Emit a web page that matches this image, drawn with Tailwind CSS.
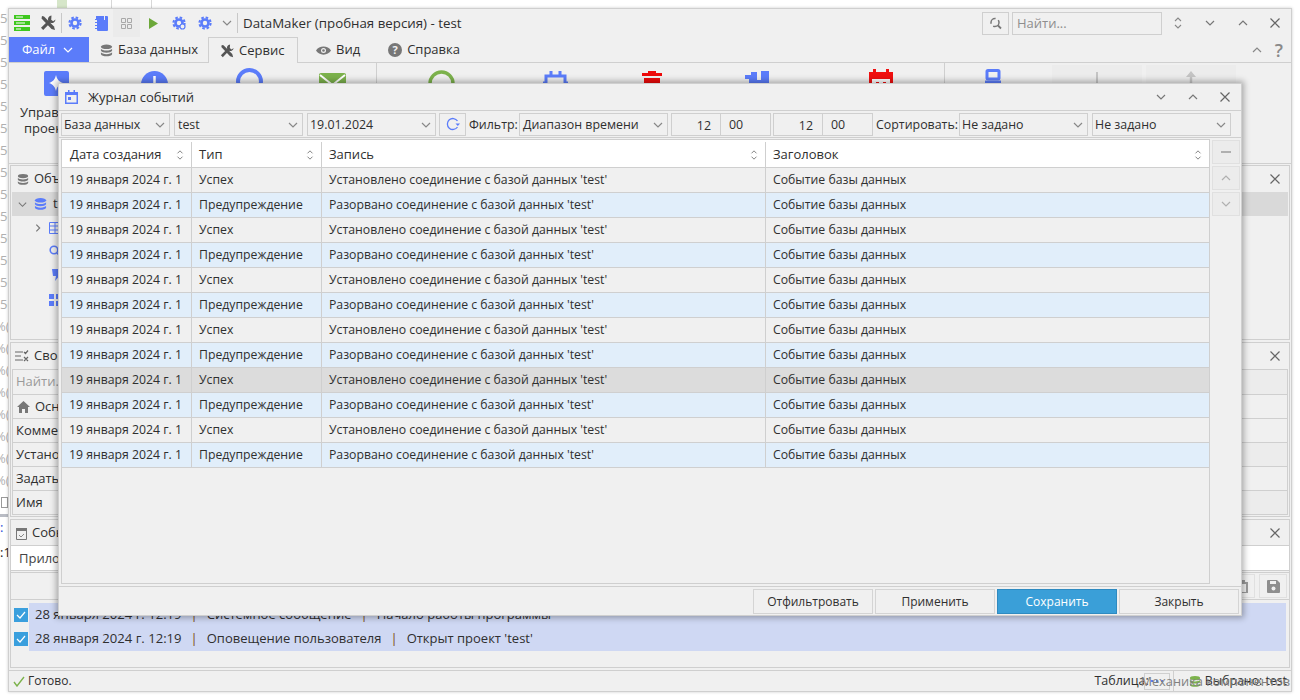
<!doctype html>
<html lang="ru">
  <head>
    <meta charset="utf-8" />
    <script src="https://cdn.jsdelivr.net/npm/@tailwindcss/browser@4"></script>
    <title>DataMaker</title>
  </head>
  <body class="relative w-[1300px] h-[700px] overflow-hidden bg-white font-['Open_Sans',sans-serif] text-[13px] text-[#2f2f2f]">
    <svg class="hidden">
      <symbol id="down" viewBox="0 0 12 12"><path d="M2 4l4 4 4-4" fill="none" stroke="currentColor" stroke-width="1.2" /></symbol>
      <symbol id="up" viewBox="0 0 12 12"><path d="M2 8l4-4 4 4" fill="none" stroke="currentColor" stroke-width="1.2" /></symbol>
      <symbol id="close" viewBox="0 0 12 12"><path d="M1.5 1.5l9 9M10.5 1.5l-9 9" fill="none" stroke="currentColor" stroke-width="1.2" /></symbol>
      <symbol id="updown" viewBox="0 0 12 16"><path d="M3 6l3-3 3 3M3 10l3 3 3-3" fill="none" stroke="currentColor" stroke-width="1.1" /></symbol>
      <symbol id="gear" viewBox="0 0 16 16"><circle cx="8" cy="8" r="4" fill="none" stroke="currentColor" stroke-width="3" /><circle cx="8" cy="8" r="6.4" fill="none" stroke="currentColor" stroke-width="2.4" stroke-dasharray="2.9 2.12" /></symbol>
      <symbol id="db" viewBox="0 0 14 14"><ellipse cx="7" cy="3" rx="6" ry="2.5" fill="currentColor" /><path d="M1 5c1 2.6 11 2.6 12 0v2.2c-1 2.8-11 2.8-12 0zM1 9c1 2.6 11 2.6 12 0v2c-1 3-11 3-12 0z" fill="currentColor" /></symbol>
      <symbol id="tools" viewBox="0 0 16 16"><path d="M2 1l2 .5 10 10 1 3.500-3.500-1L1.500 3.500z" fill="currentColor" /><path d="M11.500 .5a3.800 3.800 0 0 0-3.300 5.200L1 12.800 3.200 15l7.100-7.200A3.800 3.800 0 0 0 15.500 4.500l-2.300 1.700-2-1.500z" fill="currentColor" /></symbol>
    </svg>

    <!-- desktop behind the window -->
    <div class="absolute left-[57px] top-0 w-[10px] h-[8px] bg-[#d6e6c9]"></div>
    <div class="absolute left-[111px] top-0 w-px h-[8px] bg-[#d8d8d8]"></div>
    <div class="absolute left-[151px] top-0 w-px h-[8px] bg-[#d8d8d8]"></div>
    <div class="absolute left-0 top-[7px] w-[8px] h-[308px] overflow-hidden text-[#b0b0b0] leading-[22px] whitespace-pre">56
56
56
56
56
56
56
56
56
56
56
56
56
56</div>
    <div class="absolute left-0 top-[315px] w-[8px] h-[176px] overflow-hidden text-[#b0b0b0] leading-[22px] whitespace-pre"><div class="-ml-[5px]">%(
%(
%(
%(
%(
%(
%(
%(</div></div>
    <div class="absolute left-[1px] top-[497px] w-[7px] h-[11px] border border-[#9a9a9a]"></div>
    <div class="absolute left-0 top-[514px] w-[8px] h-[3px] bg-[#b9bcc4]"></div>
    <div class="absolute left-0 top-[519px] text-[#2b50d8] leading-[16px]">:</div>
    <div class="absolute left-0 top-[544px] text-[#222] leading-[16px] w-[8px] overflow-hidden">:1</div>

    <!-- main window -->
    <div class="absolute left-[8px] top-[8px] w-[1284px] h-[684px] bg-[#f0f0f0] border border-[#cfcfcf] shadow-[0_0_3px_rgba(0,0,0,0.2)] flex flex-col">
      <!-- title bar -->
      <div class="h-[28px] flex items-center shrink-0">
        <svg class="ml-[5px] w-[16px] h-[16px]" viewBox="0 0 16 16"><path d="M0 0h16v4H0zM0 6h16v4H0zM0 12h16v4H0z" fill="#3fc81f" /><path d="M2 1.500h7v1H2zM2 7.500h9v1H2zM2 13.500h5v1H2z" fill="#fff" /></svg>
        <svg class="ml-[10px] w-[16px] h-[16px] text-[#555]"><use href="#tools" /></svg>
        <div class="ml-[5px] w-px h-[20px] bg-[#c8c8c8]"></div>
        <svg class="ml-[6px] w-[14px] h-[14px] text-[#5b7cfa]"><use href="#gear" /></svg>
        <svg class="ml-[13px] w-[13px] h-[15px]" viewBox="0 0 13 15"><path d="M1 0h8v4h1V0h2a1 1 0 0 1 1 1v13a1 1 0 0 1-1 1H3a1 1 0 0 1-1-1v-1H0v-1h2v-2H0V9h2V7H0V6h2V4H0V3h1z" fill="#5b7cfa" /></svg>
        <div class="ml-[5px] w-[27px] h-[28px] bg-[#ebebeb] flex items-center justify-center">
          <svg class="w-[11px] h-[11px]" viewBox="0 0 11 11"><path d="M.5.500h4v4h-4zM6.500.500h4v4h-4zM.5 6.500h4v4h-4zM6.500 6.500h4v4h-4z" fill="none" stroke="#a8a8a8" /></svg>
        </div>
        <svg class="ml-[9px] w-[9px] h-[11px]" viewBox="0 0 9 11"><path d="M0 0l9 5.500L0 11z" fill="#6ca83a" /></svg>
        <svg class="ml-[14px] w-[14px] h-[14px] text-[#5b7cfa]" viewBox="0 0 14 14"><use href="#gear" width="14" height="14" /><circle cx="10.500" cy="10.500" r="2.500" fill="#f0f0f0" stroke="#5b7cfa" stroke-width="1.200" /></svg>
        <svg class="ml-[12px] w-[14px] h-[14px] text-[#5b7cfa]"><use href="#gear" /></svg>
        <svg class="ml-[9px] w-[12px] h-[12px] text-[#888]"><use href="#down" /></svg>
        <div class="ml-[4px] w-px h-[20px] bg-[#c8c8c8]"></div>
        <span class="ml-[5px] pt-px text-[13.300px]">DataMaker (пробная версия) - test</span>
        <div class="ml-auto w-[27px] h-[23px] border border-[#cfcfcf] flex items-center justify-center">
          <svg class="w-[13px] h-[13px]" viewBox="0 0 13 13"><circle cx="6" cy="5.500" r="4" fill="none" stroke="#777" stroke-width="1.500" stroke-dasharray="8 3" /><path d="M9 8.500l3 3" stroke="#777" stroke-width="1.800" /></svg>
        </div>
        <div class="ml-[3px] w-[150px] h-[23px] border border-[#cfcfcf] pl-[4px] leading-[21px] text-[#8e8e8e]">Найти...</div>
        <svg class="ml-[10px] w-[12px] h-[16px] text-[#888]"><use href="#updown" /></svg>
        <svg class="ml-[20px] w-[12px] h-[12px] text-[#777]"><use href="#down" /></svg>
        <svg class="ml-[21px] w-[12px] h-[12px] text-[#777]"><use href="#up" /></svg>
        <svg class="ml-[20px] mr-[10px] w-[12px] h-[12px] text-[#666]"><use href="#close" /></svg>
      </div>

      <!-- tabs -->
      <div class="h-[26px] flex items-stretch shrink-0 border-b border-[#cfcfcf]">
        <div class="w-[80px] h-[25px] bg-[#5b7cfa] text-white flex items-center pl-[13px]">
          Файл
          <svg class="ml-[7px] w-[12px] h-[12px]"><use href="#down" /></svg>
        </div>
        <div class="ml-[11px] pt-px flex items-center">
          <svg class="w-[13px] h-[13px] text-[#777]"><use href="#db" /></svg>
          <span class="ml-[5px]">База данных</span>
        </div>
        <div class="ml-[10px] w-[90px] h-[26px] pt-px bg-[#f0f0f0] border border-b-0 border-[#cfcfcf] flex items-center pl-[11px]">
          <svg class="w-[14px] h-[14px] text-[#555]"><use href="#tools" /></svg>
          <span class="ml-[5px]">Сервис</span>
        </div>
        <div class="ml-[18px] pt-px flex items-center">
          <svg class="w-[15px] h-[11px]" viewBox="0 0 15 11"><path d="M0 5.500C3 0 12 0 15 5.500 12 11 3 11 0 5.500z" fill="#777" /><circle cx="7.500" cy="5.500" r="2.500" fill="#f0f0f0" /><circle cx="7.500" cy="5.500" r="1.300" fill="#777" /></svg>
          <span class="ml-[5px]">Вид</span>
        </div>
        <div class="ml-[28px] pt-px flex items-center">
          <svg class="w-[14px] h-[14px]" viewBox="0 0 14 14"><circle cx="7" cy="7" r="7" fill="#777" /><text x="7" y="11" text-anchor="middle" font-size="11" font-weight="700" fill="#f0f0f0">?</text></svg>
          <span class="ml-[5px]">Справка</span>
        </div>
        <svg class="ml-auto w-[12px] h-[12px] self-center text-[#888]"><use href="#up" /></svg>
        <span class="ml-[12px] mr-[8px] self-center text-[18px] font-semibold leading-none text-[#8a8a8a]">?</span>
      </div>

      <!-- ribbon -->
      <div class="h-[100px] shrink-0 relative">
        <svg class="absolute left-[35px] top-[8px] w-[25px] h-[25px]" viewBox="0 0 25 25"><path d="M2 0h21a2 2 0 0 1 2 2v20l-6-2-4 5H2a2 2 0 0 1-2-2V2a2 2 0 0 1 2-2z" fill="#5b7cfa" /><path d="M12 4c1 4.500 3 6.500 7 8-4 1.500-6 3.500-7 8-1-4.500-3-6.500-7-8 4-1.500 6-3.500 7-8z" fill="#fff" /></svg>
        <svg class="absolute left-[132px] top-[8px] w-[27px] h-[27px]" viewBox="0 0 27 27"><circle cx="13.500" cy="13.500" r="13.500" fill="#5b7cfa" /><path d="M13.500 5v9" stroke="#fff" stroke-width="2.500" /></svg>
        <svg class="absolute left-[227px] top-[5px] w-[27px] h-[27px]" viewBox="0 0 27 27"><circle cx="13.500" cy="13.500" r="11.500" fill="none" stroke="#5b7cfa" stroke-width="4" /></svg>
        <svg class="absolute left-[310px] top-[10px] w-[27px] h-[22px]" viewBox="0 0 27 22"><rect width="27" height="22" rx="2" fill="#7cb24c" /><path d="M1 2l12.500 10L26 2" fill="none" stroke="#fff" stroke-width="2" /></svg>
        <div class="absolute left-[367px] top-0 w-px h-[70px] bg-[#cfcfcf]"></div>
        <svg class="absolute left-[419px] top-[7px] w-[27px] h-[27px]" viewBox="0 0 27 27"><circle cx="13.500" cy="13.500" r="11.500" fill="none" stroke="#7cb24c" stroke-width="3.500" /></svg>
        <svg class="absolute left-[534px] top-[8px] w-[25px] h-[25px]" viewBox="0 0 25 25"><rect x="3" y="5" width="19" height="17" fill="none" stroke="#5b7cfa" stroke-width="3" /><path d="M8 0v5M17 0v5M0 12h3M22 12h3" stroke="#5b7cfa" stroke-width="3" /></svg>
        <svg class="absolute left-[633px] top-[8px] w-[20px] h-[25px]" viewBox="0 0 20 25"><path d="M6 0h8v2h6v3H0V2h6zM2 7h16v18H2z" fill="#ee0a0a" /></svg>
        <svg class="absolute left-[736px] top-[8px] w-[25px] h-[25px]" viewBox="0 0 25 25"><path d="M6 1h6v8h4V0h8v25H4V8H0V4h6z" fill="#5b7cfa" /></svg>
        <svg class="absolute left-[860px] top-[6px] w-[24px] h-[26px]" viewBox="0 0 24 26"><path d="M4 0h3v3h10V0h3v3h4v23H0V3h4z" fill="#f01010" /><rect x="3" y="10" width="18" height="13" fill="#fff" /><path d="M7 13h3v3H7zM14 13h3v3h-3z" fill="#f01010" /></svg>
        <div class="absolute left-[935px] top-0 w-px h-[70px] bg-[#cfcfcf]"></div>
        <svg class="absolute left-[976px] top-[6px] w-[16px] h-[17px]" viewBox="0 0 16 17"><rect x="2" y="1.500" width="12" height="8.500" rx="1" fill="none" stroke="#5b7cfa" stroke-width="3" /><path d="M0 11.500h16v3H0z" fill="#5b7cfa" /></svg>
        <div class="absolute left-[1043px] top-[2px] w-[90px] h-[70px] bg-[#ececec] flex justify-center">
          <div class="mt-[7px] w-[2px] h-[20px] bg-[#c4c4c4]"></div>
        </div>
        <div class="absolute left-[1137px] top-[2px] w-[90px] h-[70px] bg-[#ececec] flex justify-center">
          <svg class="mt-[6px] w-[12px] h-[20px]" viewBox="0 0 12 20"><path d="M6 0l5 6H7.200v14H4.800V6H1z" fill="#c4c4c4" /></svg>
        </div>
        <span class="absolute left-[11px] top-[40px]">Управ...</span>
        <span class="absolute left-[15px] top-[56px]">проект</span>
      </div>

      <div class="h-px shrink-0 bg-[#cfcfcf]"></div>
      <div class="h-px shrink-0"></div>

      <!-- objects panel -->
      <div class="ml-px mr-px h-[175px] shrink-0 border border-[#cfcfcf] flex flex-col">
        <div class="h-[26px] flex items-center pl-[6px] pr-[8px] shrink-0">
          <svg class="w-[12px] h-[13px] text-[#777]"><use href="#db" /></svg>
          <span class="ml-[5px]">Объекты</span>
          <svg class="ml-auto w-[12px] h-[12px] text-[#666]"><use href="#close" /></svg>
        </div>
        <div class="h-[24px] mx-px bg-[#d9d9d9] flex items-center pl-[5px]">
          <svg class="w-[11px] h-[11px] text-[#777]"><use href="#down" /></svg>
          <svg class="ml-[6px] w-[13px] h-[14px] text-[#5b7cfa]"><use href="#db" /></svg>
          <span class="ml-[6px]">test</span>
        </div>
        <div class="h-[24px] flex items-center pl-[22px]">
          <svg class="w-[10px] h-[10px] text-[#777]" viewBox="0 0 12 12"><path d="M4 2l4 4-4 4" fill="none" stroke="currentColor" stroke-width="1.400" /></svg>
          <svg class="ml-[6px] w-[12px] h-[12px]" viewBox="0 0 12 12"><path d="M.5.500h11v11H.5zM.5 4h11M.5 8h11M6 .5v11" fill="none" stroke="#5b7cfa" /></svg>
        </div>
        <div class="h-[21px] flex items-center pl-[38px]">
          <svg class="w-[12px] h-[12px]" viewBox="0 0 12 12"><circle cx="5" cy="5" r="3.800" fill="none" stroke="#5b7cfa" stroke-width="1.600" /><path d="M8 8l3.500 3.500" stroke="#5b7cfa" stroke-width="1.600" /></svg>
        </div>
        <div class="h-[27px] flex items-center pl-[40px]">
          <svg class="w-[10px] h-[12px]" viewBox="0 0 10 12"><path d="M1 0h8L7 5h3l-6 7 1-5H2z" fill="#5b7cfa" /></svg>
        </div>
        <div class="h-[24px] flex items-center pl-[38px]">
          <svg class="w-[12px] h-[12px]" viewBox="0 0 12 12"><path d="M0 0h5v5H0zM7 0h5v5H7zM0 7h5v5H0zM7 7h5v5H7z" fill="#5b7cfa" /></svg>
        </div>
      </div>
      <div class="h-[2px] shrink-0"></div>

      <!-- properties panel -->
      <div class="ml-px mr-px h-[175px] shrink-0 border border-[#cfcfcf] flex flex-col">
        <div class="h-[26px] flex items-center pl-[4px] pr-[8px] shrink-0">
          <svg class="w-[14px] h-[12px]" viewBox="0 0 14 12"><path d="M0 2h8M0 6h6M0 10h8M9 2l1.500 1.500L13 .5M9 7l4 4M13 7l-4 4" fill="none" stroke="#666" stroke-width="1.200" /></svg>
          <span class="ml-[5px]">Свойства</span>
          <svg class="ml-auto w-[12px] h-[12px] text-[#666]"><use href="#close" /></svg>
        </div>
        <div class="mx-px flex-1 border border-[#cfcfcf] mb-px flex flex-col">
          <div class="h-[25px] border-b border-[#cfcfcf] bg-[linear-gradient(90deg,#f0f0f0_200px,#ececec_200px)] flex items-center pl-[3px] text-[#9a9a9a]">Найти...</div>
          <div class="h-[24px] border-b border-[#cfcfcf] flex items-center pl-[4px]">
            <svg class="w-[13px] h-[12px]" viewBox="0 0 13 12"><path d="M6.500 0L13 6h-2v6H8V8H5v4H2V6H0z" fill="#777" /></svg>
            <span class="ml-[5px]">Основные</span>
          </div>
          <div class="h-[24px] border-b border-[#cfcfcf] flex items-center pl-[3px]">Комментарий</div>
          <div class="h-[24px] border-b border-[#cfcfcf] bg-[linear-gradient(90deg,#f0f0f0_200px,#ececec_200px)] flex items-center pl-[3px]">Установлено</div>
          <div class="h-[24px] border-b border-[#cfcfcf] flex items-center pl-[3px]">Задать</div>
          <div class="flex-1 bg-[linear-gradient(90deg,#f0f0f0_200px,#ececec_200px)] flex items-center pl-[3px]">Имя</div>
        </div>
      </div>
      <div class="h-[2px] shrink-0"></div>

      <!-- events panel -->
      <div class="ml-px mr-px h-[149px] shrink-0 border border-[#cfcfcf] flex flex-col">
        <div class="h-[26px] pt-px flex items-center pl-[5px] pr-[8px] shrink-0 border-b border-[#cfcfcf]">
          <svg class="w-[11px] h-[13px]" viewBox="0 0 11 13"><path d="M.5 2.500h10v10H.5z" fill="none" stroke="#777" /><path d="M0 1h11v3H0z" fill="#777" /><path d="M3 8l2 2 3-3" fill="none" stroke="#888" /></svg>
          <span class="ml-[5px]">События</span>
          <svg class="ml-auto w-[12px] h-[12px] text-[#666]"><use href="#close" /></svg>
        </div>
        <div class="h-[25px] pt-px bg-white flex items-center pl-[8px] border-b border-[#cfcfcf] mb-px text-[#444]">Приложение</div>
        <div class="h-[28px] border-y border-[#cfcfcf] flex items-center justify-end pr-[2px] gap-[4px]">
          <div class="w-[24px] h-[24px] border border-[#e0e0e0] flex items-center justify-center">
            <svg class="w-[12px] h-[13px]" viewBox="0 0 12 13"><path d="M1 3h10M2 3v10h8V3M4 1h4" fill="none" stroke="#9a9a9a" stroke-width="2" /></svg>
          </div>
          <div class="w-[28px] h-[24px] border border-[#e0e0e0] flex items-center justify-center">
            <svg class="w-[13px] h-[13px]" viewBox="0 0 13 13"><path d="M1 0h9l3 3v9a1 1 0 0 1-1 1H1a1 1 0 0 1-1-1V1a1 1 0 0 1 1-1z" fill="#8e8e8e" /><path d="M3 1h6v3H3z" fill="#f0f0f0" /><circle cx="6.500" cy="8.500" r="2" fill="#f0f0f0" /></svg>
          </div>
        </div>
        <div class="mt-[2px] flex items-center h-[25px]">
          <div class="ml-[3px] w-[14px] h-[14px] bg-[#3a9fdd] flex items-center justify-center">
            <svg class="w-[10px] h-[10px]" viewBox="0 0 10 10"><path d="M1 5l3 3 5-6" fill="none" stroke="#fff" stroke-width="1.200" /></svg>
          </div>
          <div class="ml-px mr-[3px] flex-1 h-[24px] bg-[#cfd8f3] flex items-center pl-[6px]">
            <span class="text-[13.100px]">28 января 2024 г. 12:19</span><span class="mx-[9px] text-[#7a4a10]">|</span><span>Системное сообщение</span><span class="mx-[9px] text-[#7a4a10]">|</span><span>Начало работы программы</span>
          </div>
        </div>
        <div class="flex items-center h-[24px]">
          <div class="ml-[3px] w-[14px] h-[14px] bg-[#3a9fdd] flex items-center justify-center">
            <svg class="w-[10px] h-[10px]" viewBox="0 0 10 10"><path d="M1 5l3 3 5-6" fill="none" stroke="#fff" stroke-width="1.200" /></svg>
          </div>
          <div class="ml-px mr-[3px] flex-1 h-[24px] bg-[#cfd8f3] flex items-center pl-[6px]">
            <span class="text-[13.100px]">28 января 2024 г. 12:19</span><span class="mx-[9px] text-[#7a4a10]">|</span><span>Оповещение пользователя</span><span class="mx-[9px] text-[#7a4a10]">|</span><span>Открыт проект 'test'</span>
          </div>
        </div>
      </div>

      <!-- status bar -->
      <div class="mt-[2px] flex-1 border-t border-[#cfcfcf] flex items-center pl-[4px] relative">
        <svg class="w-[12px] h-[11px]" viewBox="0 0 12 11"><path d="M1 6l3 4 7-9" fill="none" stroke="#7cb24c" stroke-width="1.400" /></svg>
        <span class="ml-[3px] text-[12px]">Готово.</span>
        <span class="ml-auto text-[12.500px]">Таблица:</span>
        <div class="-ml-[5px] w-[26px] h-[17px] border border-[#cfcfcf] flex items-center justify-center gap-[3px]">
          <span class="w-[2px] h-[2px] bg-[#5b7cfa]"></span><span class="w-[2px] h-[2px] bg-[#5b7cfa]"></span><span class="w-[2px] h-[2px] bg-[#5b7cfa]"></span>
        </div>
        <div class="ml-[3px] w-px h-[20px] bg-[#cfcfcf]"></div>
        <svg class="ml-[15px] w-[12px] h-[13px] text-[#7cb24c]"><use href="#db" /></svg>
        <span class="ml-[4px] mr-[4px] text-[12.300px]">Выбрано: test</span>
        <span class="absolute right-[1px] top-0 text-[12.800px] leading-[21px] text-[#808080]">Механика компонентов</span>
      </div>
    </div>

    <!-- journal dialog -->
    <div class="absolute left-[58px] top-[83px] w-[1184px] h-[533px] bg-[#f0f0f0] border border-[#cfcfcf] shadow-[0_0_6px_2px_rgba(0,0,0,0.3)] flex flex-col">
      <div class="h-[26px] flex items-center shrink-0">
        <svg class="ml-[6px] w-[13px] h-[14px]" viewBox="0 0 13 14"><path d="M3 0h1.500v2h4V0H10v2h3v12H0V2h3z" fill="#5b7cfa" /><rect x="1.500" y="5" width="10" height="7.500" fill="#f0f0f0" /><rect x="3" y="7" width="3" height="3" fill="#5b7cfa" /></svg>
        <span class="ml-[10px] pt-px">Журнал событий</span>
        <svg class="ml-auto w-[12px] h-[12px] text-[#777]"><use href="#down" /></svg>
        <svg class="ml-[20px] w-[12px] h-[12px] text-[#777]"><use href="#up" /></svg>
        <svg class="ml-[20px] mr-[10px] w-[12px] h-[12px] text-[#666]"><use href="#close" /></svg>
      </div>

      <!-- filter row -->
      <div class="h-[28px] shrink-0 border-y border-[#cfcfcf] flex items-center pl-[2px] text-[12.400px]">
        <div class="w-[109px] h-[23px] pt-[2px] border border-[#cfcfcf] flex items-center justify-between pl-[2px] pr-[3px]">База данных<svg class="w-[12px] h-[12px] text-[#888]"><use href="#down" /></svg></div>
        <div class="ml-[4px] w-[129px] h-[23px] pt-[2px] border border-[#cfcfcf] flex items-center justify-between pl-[3px] pr-[3px]">test<svg class="w-[12px] h-[12px] text-[#888]"><use href="#down" /></svg></div>
        <div class="ml-[4px] w-[129px] h-[23px] pt-[2px] border border-[#cfcfcf] flex items-center justify-between pl-[2px] pr-[3px]">19.01.2024<svg class="w-[12px] h-[12px] text-[#888]"><use href="#down" /></svg></div>
        <div class="ml-[3px] w-[27px] h-[23px] border border-[#cfcfcf] flex items-center justify-center">
          <svg class="w-[15px] h-[14px]" viewBox="0 0 15 14"><path d="M12.500 4A5.500 5.500 0 1 0 12.500 10" fill="none" stroke="#5b7cfa" stroke-width="1.300" /><path d="M10.500 6.500h4.500L12.800 9z" fill="#5b7cfa" /></svg>
        </div>
        <span class="ml-[3px] w-[50px] pt-[2px]">Фильтр:</span>
        <div class="w-[149px] h-[23px] pt-[2px] border border-[#cfcfcf] flex items-center justify-between pl-[3px] pr-[3px]">Диапазон времени<svg class="w-[12px] h-[12px] text-[#888]"><use href="#down" /></svg></div>
        <div class="ml-[3px] w-[100px] h-[23px] border border-[#cfcfcf] flex items-center">
          <span class="w-[49px] h-full border-r border-[#cfcfcf] text-right pr-[9px] leading-[23px]">12</span><span class="pl-[8px] pt-[2px]">00</span>
        </div>
        <div class="ml-[2px] w-[100px] h-[23px] border border-[#cfcfcf] flex items-center">
          <span class="w-[49px] h-full border-r border-[#cfcfcf] text-right pr-[9px] leading-[23px]">12</span><span class="pl-[8px] pt-[2px]">00</span>
        </div>
        <span class="ml-[3px] w-[83px] pt-[2px]">Сортировать:</span>
        <div class="w-[129px] h-[23px] pt-[2px] border border-[#cfcfcf] flex items-center justify-between pl-[2px] pr-[3px]">Не задано<svg class="w-[12px] h-[12px] text-[#888]"><use href="#down" /></svg></div>
        <div class="ml-[4px] w-[139px] h-[23px] pt-[2px] border border-[#cfcfcf] flex items-center justify-between pl-[2px] pr-[3px]">Не задано<svg class="w-[12px] h-[12px] text-[#888]"><use href="#down" /></svg></div>
      </div>

      <!-- table and side buttons -->
      <div class="flex-1 flex min-h-0">
        <div class="ml-[2px] mt-px w-[1149px] border border-[#cfcfcf] flex flex-col">
          <div class="h-[28px] pt-[2px] shrink-0 bg-white border-b border-[#cfcfcf] flex items-center">
            <div class="w-[130px] h-full border-r border-[#cfcfcf] flex items-center justify-between pl-[8px] pr-[6px]">Дата создания<svg class="w-[10px] h-[14px] text-[#777]"><use href="#updown" /></svg></div>
            <div class="w-[130px] h-full border-r border-[#cfcfcf] flex items-center justify-between pl-[7px] pr-[6px]">Тип<svg class="w-[10px] h-[14px] text-[#777]"><use href="#updown" /></svg></div>
            <div class="w-[444px] h-full border-r border-[#cfcfcf] flex items-center justify-between pl-[7px] pr-[6px]">Запись<svg class="w-[10px] h-[14px] text-[#777]"><use href="#updown" /></svg></div>
            <div class="flex-1 h-full flex items-center justify-between pl-[7px] pr-[6px]">Заголовок<svg class="w-[10px] h-[14px] text-[#777]"><use href="#updown" /></svg></div>
          </div>
          <div id="rows" class="text-[12.250px]"></div>
        </div>
        <div class="ml-[2px] mt-[2px] w-[28px] flex flex-col gap-[2px] text-[#b0b0b0]">
          <div class="h-[24px] bg-[#ececec] border border-[#e0e0e0] flex items-center justify-center"><div class="w-[10px] h-[2px] bg-[#b0b0b0]"></div></div>
          <div class="h-[24px] bg-[#ececec] border border-[#e0e0e0] flex items-center justify-center"><svg class="w-[12px] h-[12px]"><use href="#up" /></svg></div>
          <div class="h-[24px] bg-[#ececec] border border-[#e0e0e0] flex items-center justify-center"><svg class="w-[12px] h-[12px]"><use href="#down" /></svg></div>
        </div>
      </div>

      <!-- footer buttons -->
      <div class="mt-[2px] h-[29px] shrink-0 border-t border-[#cfcfcf] flex items-center justify-end pr-[2px] gap-[2px] text-[12px]">
        <div class="w-[120px] h-[25px] pt-px border border-[#d4d4d4] flex items-center justify-center">Отфильтровать</div>
        <div class="w-[120px] h-[25px] pt-px border border-[#d4d4d4] flex items-center justify-center">Применить</div>
        <div class="w-[120px] h-[25px] pt-px bg-[#3a9fd8] border border-[#2f8ac0] text-white flex items-center justify-center">Сохранить</div>
        <div class="w-[120px] h-[25px] pt-px border border-[#d4d4d4] flex items-center justify-center">Закрыть</div>
      </div>
    </div>

    <script>
      const rows = document.getElementById("rows");
      for (let i = 0; i < 12; i++) {
        const warn = i % 2 === 1;
        let bg = warn ? "bg-[#e1eefa]" : "bg-[#f0f0f0]";
        if (i === 8) bg = "bg-[#dcdcdc]";
        const row = document.createElement("div");
        row.className = "h-[25px] flex items-center border-b border-[#cfcfcf] " + bg;
        row.innerHTML = `
          <div class="w-[130px] h-full border-r border-[#cfcfcf] flex items-center pl-[7px]">19 января 2024 г. 1</div>
          <div class="w-[130px] h-full border-r border-[#cfcfcf] flex items-center pl-[7px]">${warn ? "Предупреждение" : "Успех"}</div>
          <div class="w-[444px] h-full border-r border-[#cfcfcf] flex items-center pl-[7px]">${warn ? "Разорвано" : "Установлено"} соединение с базой данных 'test'</div>
          <div class="flex-1 h-full flex items-center pl-[7px]">Событие базы данных</div>`;
        rows.appendChild(row);
      }
    </script>
  </body>
</html>
